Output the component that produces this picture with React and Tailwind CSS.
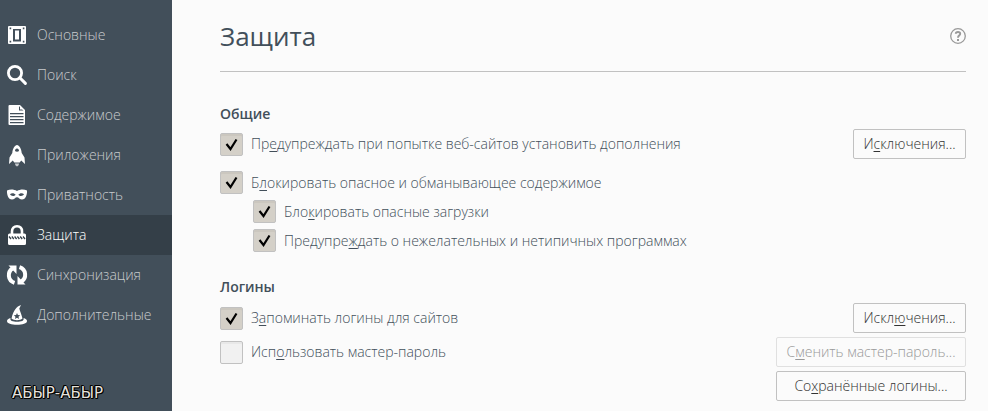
import React from "react";

const icons = {
  general: (
    <path
      fillRule="evenodd"
      d="M2 1h16a1 1 0 0 1 1 1v16a1 1 0 0 1-1 1H2a1 1 0 0 1-1-1V2a1 1 0 0 1 1-1zM6 4v12.500h8V4zM8 5.500h4v9H8zM2.600 2.600v1.600H4.200V2.600zM15.800 2.600v1.600h1.600V2.600zM2.600 15.800v1.600h1.600v-1.600zM15.800 15.800v1.600h1.600v-1.600z"
    />
  ),
  search: (
    <>
      <circle cx="8" cy="8" r="6.600" fill="none" stroke="currentColor" strokeWidth="2.800" />
      <path d="M12.800 12.800l5.600 5.600" stroke="currentColor" strokeWidth="3" strokeLinecap="round" />
    </>
  ),
  content: (
    <path
      fillRule="evenodd"
      d="M2.500 0H13l5 5v14a1 1 0 0 1-1 1H2.500a1 1 0 0 1-1-1V1a1 1 0 0 1 1-1zM12 1.200V5.500h4.500L15 4.500h-2V2zM3 8v1.200h13.500V8zM3 11v1.200h13.500V11zM3 14v1.200h13.500V14zM3 17v1.200h13.500V17z"
    />
  ),
  applications: (
    <>
      <path
        fillRule="evenodd"
        d="M10 0C7.800 0 5.500 4 5.300 8L2.500 12.500 2 19l3.800-3.500L7.300 17.500h5.400l1.500-2L18 19l-.5-6.500L14.700 8C14.500 4 12.200 0 10 0zM10 3.500c1.400 0 2 1.300 2 2.600-1 .7-3 .7-4 0 0-1.300.6-2.600 2-2.600z"
      />
      <path d="M8 18.500h4c0 1.500-1 2.500-2 3-1-.5-2-1.500-2-3z" fillOpacity=".7" />
    </>
  ),
  privacy: (
    <path
      fillRule="evenodd"
      d="M0 5.500C3 4 7 4.200 10 6c3-1.800 7-2 10-.5.300 4-1.200 9-5 9-2.300 0-3.300-2.300-5-2.300s-2.700 2.300-5 2.300c-3.800 0-5.300-5-5-9zM3 9.300c1.200 2.200 4.200 2.200 5.700.5C7.500 8 4.500 7.500 3 9.300zM17 9.300c-1.500-1.800-4.500-1.300-5.700.5 1.500 1.700 4.500 1.700 5.700-.5z"
    />
  ),
  security: (
    <>
      <path d="M5 9.500V6.500C5 3 7 1.300 10 1.300s5 1.700 5 5.200v3" fill="none" stroke="currentColor" strokeWidth="2.600" />
      <path d="M2.500 8.500h15A1.500 1.500 0 0 1 19 10v8.500a1.500 1.500 0 0 1-1.500 1.500h-15A1.500 1.500 0 0 1 1 18.500V10a1.500 1.500 0 0 1 1.500-1.500z" />
      <path
        d="M2 11.500l2 2.500M4.800 11.500l2 2.500M7.600 11.500l2 2.500M10.400 11.500l2 2.500M13.200 11.500l2 2.500M16 11.500l2 2.500"
        stroke="#343f48"
        strokeWidth="1.300"
      />
    </>
  ),
  sync: (
    <>
      <path d="M7.500 17.800C.500 15.500.200 7 5.500 3.500" fill="none" stroke="currentColor" strokeWidth="4" />
      <path d="M1.500.5H9.500V9z" />
      <path d="M12.500 2.200c7 2.300 7.300 10.800 2 14.300" fill="none" stroke="currentColor" strokeWidth="4" />
      <path d="M18.500 19.500h-8V11z" />
    </>
  ),
  advanced: (
    <>
      <path
        fillRule="evenodd"
        d="M14 0C9.500 1.500 6.500 5 4.500 13.500c2.500 2.300 8.500 2.300 11 0C14.500 9 12.800 6 12.300 3.500zM10 8l.9 2.100 2.300.2-1.700 1.500.5 2.200-2-1.200L8 14l.5-2.200-1.700-1.500 2.300-.2z"
      />
      <path d="M3.500 13C1.500 13.500 0 14.500 0 16c0 2.500 4.500 3.700 10 3.700S20 18.500 20 16c0-1.500-1.500-2.500-3.500-3 1 2.700-2.500 3.800-6.500 3.800S2.500 15.700 3.500 13z" />
    </>
  ),
};

const categories = [
  ["general", "Основные"],
  ["search", "Поиск"],
  ["content", "Содержимое"],
  ["applications", "Приложения"],
  ["privacy", "Приватность"],
  ["security", "Защита"],
  ["sync", "Синхронизация"],
  ["advanced", "Дополнительные"],
];

function Category({ icon, label, active }) {
  return (
    <a
      href={"#" + icon}
      aria-current={active ? "page" : undefined}
      className={
        "flex h-10 items-center gap-2.5 pl-[7px] text-[14px] font-light " +
        (active ? "bg-[#343f48] text-white" : "text-[#c9cbcd]")
      }
    >
      <svg viewBox="0 0 20 20" aria-hidden="true" className="size-5 shrink-0 overflow-visible fill-current text-white">
        {icons[icon]}
      </svg>
      {label}
    </a>
  );
}

function Access({ text }) {
  const [before, key, after] = text.split("_");
  return (
    <span>
      {before}
      <span className="underline decoration-1 underline-offset-2">{key}</span>
      {after}
    </span>
  );
}

function Check({ text, checked }) {
  return (
    <label className="flex items-center gap-2 text-[#424f5a]">
      <span className="grid size-[23px] shrink-0">
        <input
          type="checkbox"
          defaultChecked={checked}
          className="peer col-start-1 row-start-1 size-[23px] appearance-none rounded-xs border border-[#c1c1c1] bg-[#f1f1f1] shadow-[inset_0_2px_0_#e8e8e8] checked:bg-[#d4d0c8] checked:shadow-[inset_0_2px_0_#cbc7bf]"
        />
        <svg
          viewBox="0 0 23 23"
          aria-hidden="true"
          className="pointer-events-none invisible col-start-1 row-start-1 size-[23px] peer-checked:visible"
        >
          <path d="M6.500 11l4 5L16.500 6.500" fill="none" stroke="#000" strokeWidth="2.200" />
        </svg>
      </span>
      <Access text={text} />
    </label>
  );
}

function Button({ text, disabled, wide }) {
  return (
    <button
      type="button"
      disabled={disabled}
      className={
        "h-[30px] shrink-0 rounded-xs border border-[#c1c1c1] bg-[#fbfbfb] text-center text-[#333] disabled:border-[#e0e0e0] disabled:text-[#999] " +
        (wide ? "w-[190px]" : "w-[113px]")
      }
    >
      <Access text={text} />
    </button>
  );
}

export default function App() {
  return (
    <div className="flex min-h-screen bg-[#fbfbfb] font-['Open_Sans','Noto_Sans',sans-serif] text-[14px] leading-5 font-light">
      <aside className="flex w-[172px] shrink-0 flex-col justify-between bg-[#424f5a] pt-[15px] pb-2">
        <nav>
          {categories.map(([icon, label]) => (
            <Category key={icon} icon={icon} label={label} active={icon === "security"} />
          ))}
        </nav>
        <p className="pl-3 font-['DejaVu_Sans',sans-serif] text-[15px] font-normal text-[#e4e0dc] [text-shadow:1px_0_#000,-1px_0_#000,0_1px_#000,0_-1px_#000,1px_1px_#000,-1px_-1px_#000]">
          АБЫР-АБЫР
        </p>
      </aside>
      <main className="min-w-0 flex-1 pr-[22px] pb-2 pl-12">
        <header className="flex h-[72px] items-center justify-between border-b border-[#c1c1c1]">
          <h1 className="text-[26px] leading-9 font-normal text-[#424f5a]">Защита</h1>
          <button type="button" aria-label="Справка" className="text-[#999]">
            <svg viewBox="0 0 16 16" className="size-4">
              <circle cx="8" cy="8" r="7.300" fill="none" stroke="currentColor" strokeWidth="1.300" />
              <path d="M5.800 5.800C5.800 3.300 10.200 3.300 10.200 5.800 10.200 7.600 8 7.600 8 9.700" fill="none" stroke="currentColor" strokeWidth="1.900" />
              <path d="M7 11h2v2H7z" fill="currentColor" />
            </svg>
          </button>
        </header>

        <section className="pt-8">
          <h2 className="text-[14px] font-semibold text-[#424f5a]">Общие</h2>
          <div className="mt-[5px] flex items-center justify-between">
            <Check text="Пр_е_дупреждать при попытке веб-сайтов установить дополнения" checked />
            <Button text="И_с_ключения..." />
          </div>
          <div className="mt-3 flex flex-col items-start gap-1.5">
            <Check text="Б_л_окировать опасное и обманывающее содержимое" checked />
            <div className="flex flex-col items-start gap-1.5 pl-[33px]">
              <Check text="Бло_к_ировать опасные загрузки" checked />
              <Check text="Предупре_ж_дать о нежелательных и нетипичных программах" checked />
            </div>
          </div>
        </section>

        <section className="pt-[25px]">
          <h2 className="text-[14px] font-semibold text-[#424f5a]">Логины</h2>
          <div className="mt-1.5 flex flex-col gap-1">
            <div className="flex items-center justify-between">
              <Check text="З_а_поминать логины для сайтов" checked />
              <Button text="Искл_ю_чения..." />
            </div>
            <div className="flex items-center justify-between">
              <Check text="Исп_о_льзовать мастер-пароль" />
              <Button text="С_м_енить мастер-пароль..." disabled wide />
            </div>
            <div className="flex justify-end">
              <Button text="Со_х_ранённые логины..." wide />
            </div>
          </div>
        </section>
      </main>
    </div>
  );
}
